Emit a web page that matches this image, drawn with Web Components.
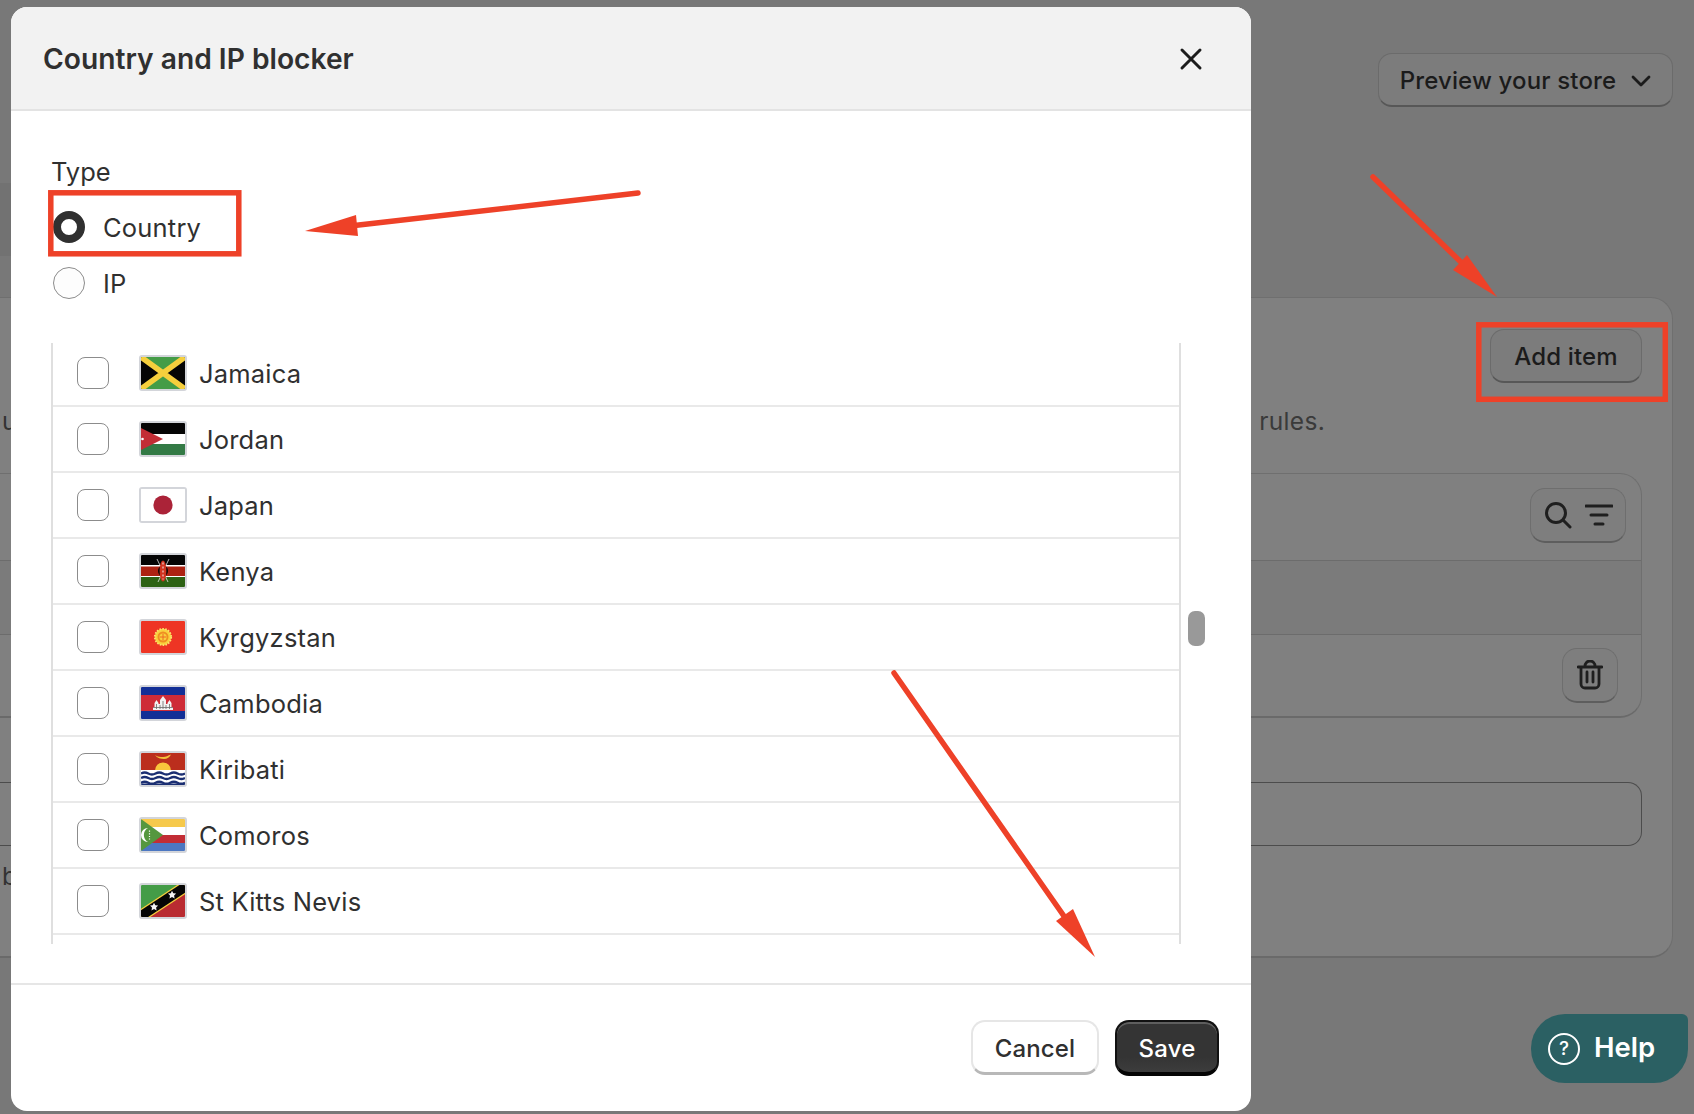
<!DOCTYPE html>
<html lang="en">
<head>
<meta charset="utf-8">
<title>Country and IP blocker</title>
<style>
  html, body { margin: 0; height: 100%; }
  body { background: #787878; font-family: Inter, "Liberation Sans", sans-serif; color: #303030; overflow: hidden; }
</style>
</head>
<body>

<template id="flag-art">
  <svg data-flag="jm" viewBox="0 0 44 32"><rect width="44" height="32" fill="#449c47"/><path d="M0 0 19 16 0 32zM44 0 25 16 44 32z" fill="#050505"/><path d="M0 0 44 32M44 0 0 32" stroke="#f6cf3d" stroke-width="5.500"/></svg>
  <svg data-flag="jo" viewBox="0 0 44 32"><rect width="44" height="11" fill="#050505"/><rect y="11" width="44" height="10" fill="#fff"/><rect y="21" width="44" height="11" fill="#337a45"/><path d="M0 5 22 16 0 27z" fill="#c22d35"/><circle cx="1.500" cy="16" r="1.300" fill="#fff"/></svg>
  <svg data-flag="jp" viewBox="0 0 44 32"><rect width="44" height="32" fill="#fff"/><circle cx="22" cy="16" r="9.6" fill="#ab2338"/></svg>
  <svg data-flag="ke" viewBox="0 0 44 32"><rect width="44" height="11" fill="#050505"/><rect y="10" width="44" height="13" fill="#fff"/><rect y="11.500" width="44" height="9.500" fill="#ad2212"/><rect y="22" width="44" height="10" fill="#2d6214"/><path d="M16 4 27 27M28 4 17 27" stroke="#e4e4e4" stroke-width=".8"/><ellipse cx="22" cy="16" rx="5" ry="5.500" fill="#050505"/><ellipse cx="22" cy="16" rx="3.400" ry="10.500" fill="#d0321f"/><path d="M22 7.500v17" stroke="#f2f2f2" stroke-width="1" stroke-dasharray="2 2"/></svg>
  <svg data-flag="kg" viewBox="0 0 44 32"><rect width="44" height="32" fill="#ee3524"/><circle cx="22" cy="16" r="8.200" fill="#f9d13c" stroke="#fbe36b" stroke-width="1.800" stroke-dasharray="1.600 1.300"/><circle cx="22" cy="16" r="5.500" fill="#ef8f22"/><circle cx="22" cy="16" r="3.600" fill="#f9d13c"/><path d="M18.800 16h6.400M22 12.800v6.400" stroke="#ee6a24" stroke-width="1"/></svg>
  <svg data-flag="kh" viewBox="0 0 44 32"><rect width="44" height="32" fill="#122f96"/><rect y="8" width="44" height="16" fill="#ce2b37"/><path d="M12 23v-3h1.500v-4l2-3 2 3v1h1.500v-4l3-4 3 4v4h1.500v-1l2-3 2 3v4h1.500v3z" fill="#f1f1f1"/><path d="M15.500 17v5M19 18v4M22 14v8M25 18v4M28.500 17v5M12 20.500h20" stroke="#6a6a6a" stroke-width=".8"/></svg>
  <svg data-flag="ki" viewBox="0 0 44 32"><rect width="44" height="18" fill="#bb2e1d"/><path d="M14 17.500a8 8 0 0 1 16 0z" fill="#f9c53c"/><path d="M14 2c3 2 5 2 8 2 3 0 5-1.500 8-2.500-1 2.500-4 4.500-7 4.500s-7-1-9-4z" fill="#f4c33a"/><rect y="17" width="44" height="15" fill="#fff"/><path d="M0 20.500q3.700-2 7.300 0t7.300 0 7.300 0 7.300 0 7.300 0 7.500 0M0 25q3.700-2 7.300 0t7.300 0 7.300 0 7.300 0 7.300 0 7.500 0M0 29.800q3.700-2 7.300 0t7.300 0 7.300 0 7.300 0 7.300 0 7.500 0" fill="none" stroke="#1a2e72" stroke-width="2.400"/><rect y="30.500" width="44" height="1.500" fill="#1a2e72"/></svg>
  <svg data-flag="km" viewBox="0 0 44 32"><rect width="44" height="8" fill="#f6c94b"/><rect y="8" width="44" height="8" fill="#fff"/><rect y="16" width="44" height="8" fill="#c22d35"/><rect y="24" width="44" height="8" fill="#4c77c2"/><path d="M0 0 22 16 0 32z" fill="#55973f"/><path d="M7 9a7 7 0 1 0 0 14 8 8 0 0 1 0-14z" fill="#fff"/><path d="M8.500 11.500v9" stroke="#fff" stroke-width="1.200" stroke-dasharray="1.200 1.500"/></svg>
  <svg data-flag="kn" viewBox="0 0 44 32"><path d="M0 0h44L0 32z" fill="#449c47"/><path d="M44 0v32H0z" fill="#b92b31"/><path d="M-2 32.300 46 .7" stroke="#f6cf3d" stroke-width="12"/><path d="M-2 32.300 46 .7" stroke="#050505" stroke-width="9.500"/><path d="m13 17.800 1.300 2.500 2.800.3-2 2 .5 2.800-2.600-1.300-2.500 1.300.5-2.800-2-2 2.800-.3zM31 5.800l1.300 2.500 2.800.3-2 2 .5 2.800-2.600-1.300-2.500 1.300.5-2.800-2-2 2.800-.3z" fill="#f4f4f4"/></svg>
</template>

<template id="flag-icon-tpl">
  <style>
    :host { display: block; width: 48px; height: 36px; box-sizing: border-box; border: 2px solid #d3d5da; border-radius: 3px; overflow: hidden; }
    svg { display: block; width: 44px; height: 32px; }
  </style>
</template>

<template id="country-row-tpl">
  <style>
    :host { display: flex; align-items: center; height: 66px; box-sizing: border-box; border-bottom: 2px solid #e9e9e9; padding-left: 24px; font-size: 25.5px; letter-spacing: .2px; color: #303030; }
    .box { width: 32px; height: 32px; box-sizing: border-box; border: 1.5px solid #8c8c8c; border-radius: 8px; background: #fff; margin-right: 30px; }
    flag-icon { margin-right: 12px; }
  </style>
  <span class="box"></span><flag-icon></flag-icon><slot></slot>
</template>

<template id="radio-option-tpl">
  <style>
    :host { display: flex; align-items: center; height: 32px; font-size: 25.5px; letter-spacing: .2px; color: #303030; }
    .dot { width: 32px; height: 32px; box-sizing: border-box; border-radius: 50%; border: 1.5px solid #8c8c8c; background: #fdfdfd; margin: 0 18px 0 2px; }
    :host([checked]) .dot { border: 8.5px solid #303030; background: #fff; }
  </style>
  <span class="dot"></span><slot></slot>
</template>

<template id="poly-button-tpl">
  <style>
    :host { display: inline-flex; align-items: center; justify-content: center; box-sizing: border-box; height: 54px; border-radius: 14px; font-size: 24px; letter-spacing: .15px; font-weight: 500; gap: 15px; white-space: nowrap; }
    :host([tone="ghost"]) { background: #7c7c7c; color: #1b1b1b; border: 1.500px solid #6b6b6b; border-bottom: 2px solid #575757; padding-top: 2px; }
    :host([tone="white"]) { background: #fff; color: #303030; border: 2px solid #e6e6e6; border-bottom: 3px solid #b8b8b8; padding-top: 2px; }
    :host([tone="dark"]) { background: linear-gradient(#343434 70%, #3d3d3d); color: #fff; border: 2px solid #111; border-bottom: 4px solid #050505; box-shadow: inset 0 2px 0 #5e5e5e; padding-top: 2px; }
  </style>
  <slot></slot>
</template>

<template id="page-card-tpl">
  <style>
    :host { display: block; background: #808080; border: 1.500px solid #6f6f6f; border-bottom: 2px solid #6a6a6a; border-radius: 0 22px 22px 0; box-sizing: border-box; height: 661px; margin: 41px 21px 0 -10px; padding: 31px 30px 0 0; color: #3a3a3a; font-size: 24.500px; letter-spacing: .3px; }
    .top { display: flex; justify-content: flex-end; letter-spacing: .3px; }
    .note { display: flex; justify-content: space-between; height: 30px; line-height: 30px; margin-top: 23px; padding-left: 11px; }
    .note b { font-weight: 400; color: #333; }
    .table { margin: 37px 0 0 0; height: 245px; box-sizing: border-box; border: 1.500px solid #6f6f6f; border-left: 0; border-bottom: 2px solid #6a6a6a; border-radius: 0 22px 22px 0; display: flex; flex-direction: column; }
    .r1 { height: 87px; display: flex; justify-content: flex-end; padding: 14px 15px 0 0; box-sizing: border-box; border-bottom: 1.500px solid #6c6c6c; }
    .r2 { height: 74px; background: #7b7b7b; border-bottom: 1.500px solid #6c6c6c; box-sizing: border-box; }
    .r3 { flex: 1; display: flex; justify-content: flex-end; padding: 13px 23px 0 0; box-sizing: border-box; }
    .square { display: flex; align-items: center; justify-content: center; box-sizing: border-box; height: 55px; border: 1.500px solid #6e6e6e; border-bottom: 2px solid #5e5e5e; border-radius: 15px; background: #7e7e7e; gap: 13px; }
    .input { margin-top: 64px; height: 64px; box-sizing: border-box; border: 1.500px solid #4c4c4c; border-left: 0; border-radius: 0 14px 14px 0; }
    .below { padding-left: 11px; margin-top: 15px; line-height: 30px; color: #333; }
    svg { display: block; fill: none; stroke: #1f1f1f; stroke-linecap: round; }
  </style>
  <div class="top"><poly-button tone="ghost" style="width:152px"><slot name="action"></slot></poly-button></div>
  <div class="note"><b>u</b><slot></slot></div>
  <div class="table">
    <div class="r1"><span class="square" style="width:96px">
      <svg width="28" height="28" viewBox="0 0 28 28" stroke-width="3"><circle cx="12" cy="12" r="9.500"/><path d="m19 19 7 7"/></svg>
      <svg width="28" height="22" viewBox="0 0 28 22" stroke-width="3"><path d="M1 2h26M6 11h16M10 20h8"/></svg>
    </span></div>
    <div class="r2"></div>
    <div class="r3"><span class="square" style="width:56px">
      <svg width="26" height="30" viewBox="0 0 26 30" stroke-width="2.800"><path d="M1 7h24M8 7V6a5 5 0 0 1 10 0v1M4 7v17a4 4 0 0 0 4 4h10a4 4 0 0 0 4-4V7M10 12v10M16 12v10"/></svg>
    </span></div>
  </div>
  <div class="input"></div>
  <div class="below">b</div>
</template>

<template id="page-shell-tpl">
  <style>
    :host { display: block; height: 1114px; overflow: hidden; box-sizing: border-box; padding-top: 53px; }
    .head { display: flex; justify-content: flex-end; padding-right: 21px; }
    .strip { width: 11px; height: 73px; margin-top: 76px; background: #727272; }
  </style>
  <div class="head"><slot name="head"></slot></div>
  <div class="strip"></div>
  <slot></slot>
</template>

<template id="help-badge-tpl">
  <style>
    :host { position: absolute; left: 1531px; top: 1014px; width: 157px; height: 69px; box-sizing: border-box; padding-left: 17px; display: flex; align-items: center; gap: 14px; background: #2b6063; color: #fff; border-radius: 34px 6px 34px 34px; font-size: 27.5px; font-weight: 600; }
    .q { width: 32px; height: 32px; box-sizing: border-box; border: 2.500px solid #fff; border-radius: 50%; display: flex; align-items: center; justify-content: center; font-size: 19px; font-weight: 500; }
    .t { padding-bottom: 4px; }
  </style>
  <span class="q">?</span><span class="t"><slot></slot></span>
</template>

<template id="modal-dialog-tpl">
  <style>
    :host { position: absolute; left: 11px; top: 7px; width: 1240px; height: 1104px; background: #fff; border-radius: 16px; overflow: hidden; display: flex; flex-direction: column; color: #303030; }
    header { height: 104px; box-sizing: border-box; flex: none; background: #f2f2f2; border-bottom: 2px solid #e3e3e3; display: flex; align-items: center; justify-content: space-between; padding: 2px 48px 0 32px; font-size: 28.2px; font-weight: 600; }
    header svg { display: block; fill: none; stroke: #1c1c1c; stroke-width: 3; stroke-linecap: round; }
    .body { flex: 1; min-height: 0; padding: 46px 0 0 40px; box-sizing: border-box; }
    .label { font-size: 25.5px; line-height: 30px; height: 30px; }
    .choices { display: flex; flex-direction: column; gap: 24px; margin-top: 24px; }
    .listwrap { display: flex; gap: 7px; margin-top: 44px; }
    .list { width: 1130px; height: 601px; box-sizing: border-box; overflow: hidden; border-left: 2px solid #dfdfdf; border-right: 2px solid #dfdfdf; }
    .inner { margin-top: -2px; }
    .thumb { width: 17px; height: 35px; margin-top: 268px; background: #999; border-radius: 7px; }
    footer { height: 128px; box-sizing: border-box; flex: none; border-top: 2px solid #e6e6e6; display: flex; justify-content: flex-end; gap: 16px; padding: 35px 32px 0 0; align-items: flex-start; }
  </style>
  <header>
    <slot name="title"></slot>
    <svg width="24" height="24" viewBox="0 0 24 24"><path d="M3 3l18 18M21 3 3 21"/></svg>
  </header>
  <div class="body">
    <div class="label"><slot name="label"></slot></div>
    <div class="choices"><slot name="choices"></slot></div>
    <div class="listwrap">
      <div class="list"><div class="inner"><slot></slot></div></div>
      <div class="thumb"></div>
    </div>
  </div>
  <footer><slot name="actions"></slot></footer>
</template>

<template id="red-marks-tpl">
  <style>
    :host { position: absolute; inset: 0; pointer-events: none; display: block; }
    svg { display: block; }
    path.line { fill: none; stroke: #ee4128; stroke-linecap: round; }
    path.head { fill: #ee4128; }
    rect { fill: none; stroke: #ee4128; stroke-width: 5.500; }
  </style>
  <svg width="1694" height="1114" viewBox="0 0 1694 1114">
    <rect x="50.800" y="192.800" width="188" height="61"/>
    <rect x="1478.800" y="324.800" width="186.500" height="74.500"/>
    <path class="line" stroke-width="5.500" d="M638 193 350 226"/>
    <path class="head" d="M305 231 356 215 358 236z"/>
    <path class="line" stroke-width="5.500" d="M1373 177 1465 266"/>
    <path class="head" d="M1497 297 1467 255 1453 270z"/>
    <path class="line" stroke-width="5.500" d="M894 673 1066 919"/>
    <path class="head" d="M1095 957 1056 921 1073 909z"/>
  </svg>
</template>

<script>
  // every element here just clones its template into an open shadow root
  const plain = (name, tplId) => {
    customElements.define(name, class extends HTMLElement {
      constructor() {
        super();
        this.attachShadow({ mode: "open" });
        this.shadowRoot.append(document.getElementById(tplId).content.cloneNode(true));
      }
    });
  };

  class FlagIcon extends HTMLElement {
    constructor() {
      super();
      this.attachShadow({ mode: "open" });
      this.shadowRoot.append(document.getElementById("flag-icon-tpl").content.cloneNode(true));
    }
    connectedCallback() {
      const art = document.getElementById("flag-art").content.querySelector(`[data-flag="${this.getAttribute("code")}"]`);
      if (art) this.shadowRoot.append(art.cloneNode(true));
    }
  }
  customElements.define("flag-icon", FlagIcon);

  class CountryRow extends HTMLElement {
    constructor() {
      super();
      this.attachShadow({ mode: "open" });
      this.shadowRoot.append(document.getElementById("country-row-tpl").content.cloneNode(true));
    }
    connectedCallback() {
      this.shadowRoot.querySelector("flag-icon").setAttribute("code", this.getAttribute("flag"));
    }
  }
  customElements.define("country-row", CountryRow);

  plain("radio-option", "radio-option-tpl");
  plain("poly-button", "poly-button-tpl");
  plain("page-card", "page-card-tpl");
  plain("page-shell", "page-shell-tpl");
  plain("help-badge", "help-badge-tpl");
  plain("modal-dialog", "modal-dialog-tpl");
  plain("red-marks", "red-marks-tpl");
</script>

<page-shell>
  <poly-button slot="head" tone="ghost" style="width:295px">Preview your store
    <svg width="20" height="12" viewBox="0 0 20 12" fill="none" stroke="#1b1b1b" stroke-width="2.800" stroke-linecap="round" stroke-linejoin="round"><path d="M2 2l8 8 8-8"/></svg>
  </poly-button>
  <page-card>
    <span slot="action">Add item</span>
    <span style="margin-left:auto;padding-right:317px;color:#3a3a3a">rules.</span>
  </page-card>
</page-shell>

<help-badge>Help</help-badge>

<modal-dialog>
  <span slot="title">Country and IP blocker</span>
  <span slot="label">Type</span>
  <radio-option slot="choices" checked>Country</radio-option>
  <radio-option slot="choices">IP</radio-option>
  <country-row flag="jm">Jamaica</country-row>
  <country-row flag="jo">Jordan</country-row>
  <country-row flag="jp">Japan</country-row>
  <country-row flag="ke">Kenya</country-row>
  <country-row flag="kg">Kyrgyzstan</country-row>
  <country-row flag="kh">Cambodia</country-row>
  <country-row flag="ki">Kiribati</country-row>
  <country-row flag="km">Comoros</country-row>
  <country-row flag="kn">St Kitts Nevis</country-row>
  <poly-button slot="actions" tone="white" style="width:128px;height:55px">Cancel</poly-button>
  <poly-button slot="actions" tone="dark" style="width:104px;height:56px">Save</poly-button>
</modal-dialog>

<red-marks></red-marks>
</body>
</html>
